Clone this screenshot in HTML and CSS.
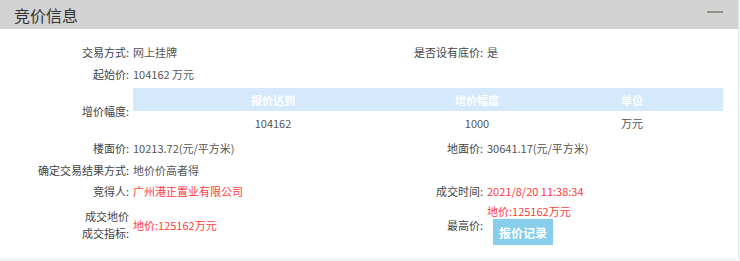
FILE: index.html
```html
<!DOCTYPE html>
<html lang="zh-CN">

<head>
    <meta charset="UTF-8">
    <meta name="viewport" content="width=device-width, initial-scale=1.0">
    <title>竞价信息</title>
    <link rel="stylesheet" href="styles.css">
</head>

<body>
    <div class="panel">
        <div class="panel-head">
            <span class="panel-title">竞价信息</span>
            <span class="collapse"></span>
        </div>

        <div class="info">
            <div class="label">交易方式:</div>
            <div class="value">网上挂牌</div>
            <div class="label">是否设有底价:</div>
            <div class="value">是</div>

            <div class="label">起始价:</div>
            <div class="value span-3">104162 万元</div>

            <div class="label mid">增价幅度:</div>
            <div class="span-3 table-cell">
                <table class="price-table">
                    <thead>
                        <tr>
                            <th class="col-1">报价达到</th>
                            <th class="col-2">增价幅度</th>
                            <th class="col-3">单位</th>
                        </tr>
                    </thead>
                    <tbody>
                        <tr>
                            <td>104162</td>
                            <td>1000</td>
                            <td>万元</td>
                        </tr>
                    </tbody>
                </table>
            </div>

            <div class="label">楼面价:</div>
            <div class="value">10213.72(元/平方米)</div>
            <div class="label">地面价:</div>
            <div class="value">30641.17(元/平方米)</div>

            <div class="label">确定交易结果方式:</div>
            <div class="value span-3">地价价高者得</div>

            <div class="label short">竞得人:</div>
            <div class="value short red">广州港正置业有限公司</div>
            <div class="label short">成交时间:</div>
            <div class="value short red">2021/8/20 11:38:34</div>

            <div class="label mid two-line">成交地价<br>成交指标:</div>
            <div class="value mid red">地价:125162万元</div>
            <div class="label mid">最高价:</div>
            <div class="value top-value">
                <div class="red">地价:125162万元</div>
                <button class="record-btn">报价记录</button>
            </div>
        </div>
    </div>
</body>

</html>
```

FILE: styles.css
```css
body {
    margin: 0;
    font-family: "Noto Sans CJK SC", "Liberation Sans", sans-serif;
    font-size: 11px;
    background-color: #f2f5f5;
    color: #444;
}

.panel {
    width: 738px;
    height: 258px;
    background-color: white;
    border-right: 1px solid #e3e8e8;
}

.panel-head {
    height: 29px;
    background-color: #d3d3d3;
    display: flex;
    justify-content: space-between;
    align-items: center;
    padding: 0 15px 0 14px;
}

.panel-title {
    font-size: 16px;
    color: #333;
}

.collapse {
    width: 16px;
    height: 2px;
    background-color: #8d9488;
    margin-top: -5px;
}

.info {
    display: grid;
    grid-template-columns: 131px 224px 130px 1fr;
    padding-top: 12px;
}

.label,
.value {
    line-height: 16px;
    padding: 3px 0;
}

.label {
    text-align: right;
    padding-right: 2px;
    color: #444;
}

.value {
    padding-left: 2px;
    color: #555;
}

.short {
    line-height: 15px;
}

.top-value {
    padding-top: 1px;
}

.span-3 {
    grid-column: span 3;
}

.mid {
    align-self: center;
}

.two-line {
    line-height: 17px;
}

.red {
    color: #ff3b3b;
}

.table-cell {
    padding: 3px 15px 2px 2px;
}

.price-table {
    width: 100%;
    border-collapse: collapse;
    text-align: center;
}

.price-table th {
    height: 23px;
    padding: 0;
    background-color: #d4e9fb;
    color: white;
    font-weight: bold;
}

.price-table td {
    height: 24px;
    padding: 0;
    color: #555;
}

.col-1 {
    width: 280px;
}

.col-2 {
    width: 128px;
}

.record-btn {
    display: block;
    margin-left: 6px;
    height: 26px;
    padding: 0 6px;
    border: none;
    background-color: #87ceeb;
    color: white;
    font-family: inherit;
    font-size: 12px;
    font-weight: bold;
}
```
